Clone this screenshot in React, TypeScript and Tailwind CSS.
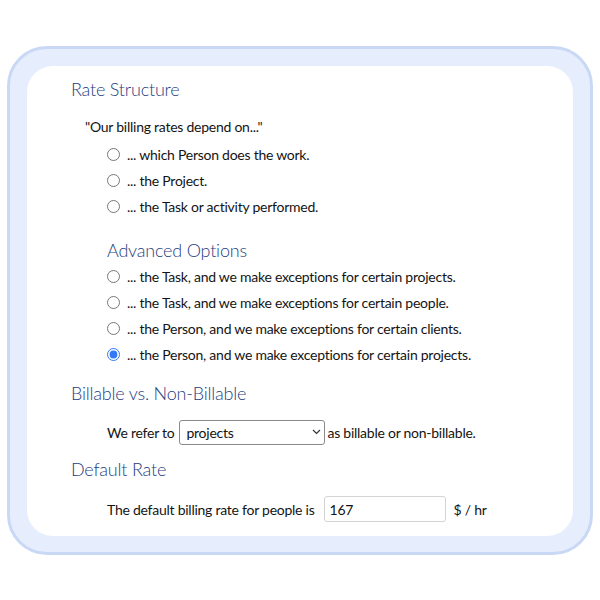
import React from "react";

const basic = [
  "... which Person does the work.",
  "... the Project.",
  "... the Task or activity performed.",
];

const advanced = [
  "... the Task, and we make exceptions for certain projects.",
  "... the Task, and we make exceptions for certain people.",
  "... the Person, and we make exceptions for certain clients.",
  "... the Person, and we make exceptions for certain projects.",
];

const Heading = ({ children, className = "" }: { children: React.ReactNode; className?: string }) => (
  <h2
    className={`h-[26px] text-[18px] leading-[26px] font-light tracking-[-0.2px] text-[#1f3d80] ${className}`}
  >
    {children}
  </h2>
);

const RadioRow = ({ label, checked }: { label: string; checked?: boolean }) => (
  <label className="flex h-[26px] items-center gap-[7px]">
    <input
      type="radio"
      name="rate"
      defaultChecked={checked}
      className="m-0 h-[13px] w-[13px] accent-[#3478f6]"
    />
    <span>{label}</span>
  </label>
);

export default function App() {
  return (
    <div
      className="min-h-[600px] bg-white pt-[46px] text-[14px] tracking-[-0.25px] text-[#141414]"
      style={{ fontFamily: "Lato, 'Open Sans', sans-serif" }}
    >
      <div className="mx-[7px] h-[509px] rounded-[40px] border-[3px] border-[#c9d8f5] bg-[#e6edfc] p-[17px]">
        <div className="h-[470px] rounded-[26px] bg-white pl-[44px] pt-[10px]">
          <Heading>Rate Structure</Heading>
          <p className="ml-[14px] mt-[15px] h-[20px] leading-[20px]">"Our billing rates depend on..."</p>
          <div className="ml-[36px] mt-[4px]">
            {basic.map((t) => (
              <RadioRow key={t} label={t} />
            ))}
          </div>
          <div className="ml-[36px] mt-[18px]">
            <Heading>Advanced Options</Heading>
            {advanced.map((t, i) => (
              <RadioRow key={t} label={t} checked={i === 3} />
            ))}
          </div>

          <Heading className="mt-[13px]">Billable vs. Non-Billable</Heading>
          <div className="ml-[36px] mt-[13px] flex h-[26px] items-center">
            <span>We refer to</span>
            <div className="relative ml-[5px] mr-[2px]">
              <select
                defaultValue="projects"
                className="h-[25px] w-[146px] appearance-none rounded-[3px] border border-[#8a8a8a] bg-white pl-[6px] text-[14px] text-[#141414] outline-none"
                style={{ fontFamily: "inherit" }}
              >
                <option value="projects">projects</option>
                <option value="tasks">tasks</option>
              </select>
              <svg
                className="pointer-events-none absolute right-[4px] top-[9px]"
                width="9"
                height="6"
                viewBox="0 0 9 6"
                fill="none"
              >
                <path d="M1 1l3.5 3.5L8 1" stroke="#333" strokeWidth="1.2" />
              </svg>
            </div>
            <span>as billable or non-billable.</span>
          </div>

          <Heading className="mt-[11px]">Default Rate</Heading>
          <div className="ml-[36px] mt-[14px] flex h-[26px] items-center">
            <span>The default billing rate for people is</span>
            <input
              defaultValue="167"
              className="ml-[9px] h-[26px] w-[122px] rounded-[3px] border border-[#d4d4d4] px-[5px] text-[14px] outline-none"
              style={{ fontFamily: "inherit" }}
            />
            <span className="ml-[8px]">$ / hr</span>
          </div>
        </div>
      </div>
    </div>
  );
}
